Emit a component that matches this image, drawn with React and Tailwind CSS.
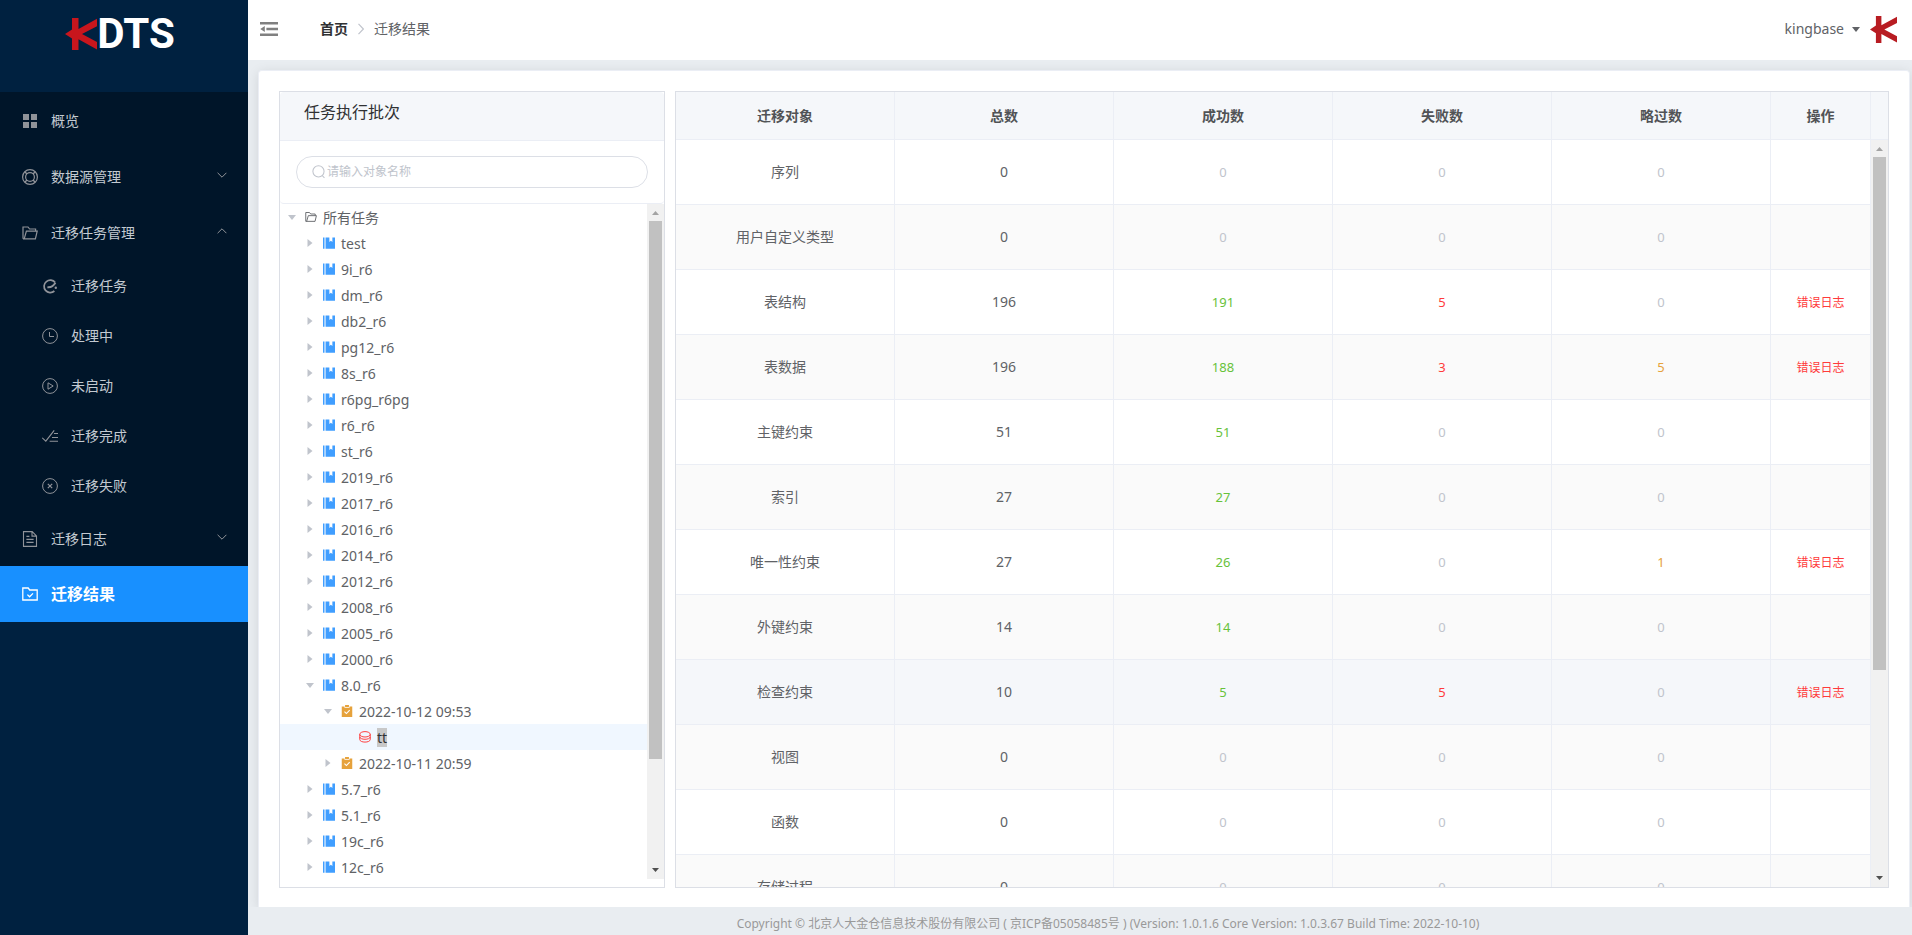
import { useState } from 'react';
import clsx from 'clsx';

const Icon = ({ className, children }) => (
  <svg
    viewBox="0 0 16 16"
    className={clsx('shrink-0', className)}
    fill="none"
    stroke="currentColor"
    strokeWidth="1"
    aria-hidden="true"
  >
    {children}
  </svg>
);

const icons = {
  menu: <path d="M1 1h6v6H1zM9 1h6v6H9zM1 9h6v6H1zM9 9h6v6H9z" fill="currentColor" stroke="none" />,
  help: (
    <>
      <circle cx="8" cy="8" r="7.4" strokeWidth="1.2" />
      <circle cx="8" cy="8" r="4.4" strokeWidth="1.2" />
      <path d="M3 3l2 2M13 3l-2 2M3 13l2-2M13 13l-2-2" strokeWidth="1.4" />
    </>
  ),
  folderOpened: (
    <path d="M1 13.8V2h5l1.6 2h6v2.2M1 13.8h12.4l1.8-7.6H4.4L2.2 13.8" strokeWidth="1.2" />
  ),
  task: (
    <>
      <path d="M13.2 4.6A6.2 6.2 0 1 0 12.4 13" strokeWidth="1.7" />
      <path d="M5.4 9.2c3.4.4 6.2-1.2 8-4.4" strokeWidth="1.9" />
      <circle cx="13.8" cy="9.8" r="1.2" fill="currentColor" stroke="none" />
    </>
  ),
  time: (
    <>
      <circle cx="8" cy="8" r="7.4" />
      <path d="M7.5 4v4.5H12" />
    </>
  ),
  play: (
    <>
      <circle cx="8" cy="8" r="7.4" />
      <path d="M6 4.8v6.4L11.2 8z" />
    </>
  ),
  finished: (
    <path d="M.2 9.8l3.6 3.4L12.2 2.4M12 5.5h4M10 9.5h6M7.6 13.3H16" strokeWidth="1.1" />
  ),
  close: (
    <>
      <circle cx="8" cy="8" r="7.4" />
      <path d="M5.8 5.8l4.4 4.4M10.2 5.8l-4.4 4.4" strokeWidth="1.2" />
    </>
  ),
  document: (
    <path d="M1.5.6h8.7l4.3 4.3v10.5h-13zM10 .8v4.3h4.3M4.4 5.4h3M4.4 8.4h7.2M4.4 11.4h7.2" strokeWidth="1.1" />
  ),
  folderChecked: (
    <path d="M.8 14V2h5.4l1.5 2h7.5v10zM5.4 8.6l2.2 2.2 3.4-3.4" strokeWidth="1.3" />
  ),
  notebook: (
    <path d="M0 .5h2v15H0zM3.4.5h5.1v6l2-1.6 2 1.6v-6H16v15H3.4z" fill="currentColor" stroke="none" />
  ),
  clipboard: (
    <>
      <path d="M1 2h3.6v1.6h6.8V2H15v14H1zM5.4 0h5.2v2.6H5.4z" fill="currentColor" stroke="none" />
      <path d="M4.6 8.8l2.6 2.6 4.4-4.6" stroke="#fff" strokeWidth="1.5" />
    </>
  ),
  coin: (
    <>
      <ellipse cx="8" cy="4.4" rx="7" ry="3.6" strokeWidth="1.3" />
      <path d="M1 4.4v3.2c0 4.6 14 4.6 14 0V4.4M1 7.8v3.4c0 4.8 14 4.8 14 0V7.8" strokeWidth="1.3" />
    </>
  ),
  search: (
    <>
      <circle cx="7.4" cy="7.2" r="6.4" strokeWidth="1.2" />
      <path d="M11.6 12l2.6 2.8" strokeWidth="1.2" />
    </>
  ),
};

const subMenus = [
  { icon: 'task', label: '迁移任务' },
  { icon: 'time', label: '处理中' },
  { icon: 'play', label: '未启动' },
  { icon: 'finished', label: '迁移完成' },
  { icon: 'close', label: '迁移失败' },
];

const treeNodes = [
  { label: '所有任务', level: 0, icon: 'folderOpened', open: true },
  ...[
    'test', '9i_r6', 'dm_r6', 'db2_r6', 'pg12_r6', '8s_r6', 'r6pg_r6pg', 'r6_r6', 'st_r6',
    '2019_r6', '2017_r6', '2016_r6', '2014_r6', '2012_r6', '2008_r6', '2005_r6', '2000_r6',
  ].map((label) => ({ label, level: 1, icon: 'notebook' })),
  { label: '8.0_r6', level: 1, icon: 'notebook', open: true },
  { label: '2022-10-12 09:53', level: 2, icon: 'clipboard', open: true },
  { label: 'tt', level: 3, icon: 'coin', leaf: true },
  { label: '2022-10-11 20:59', level: 2, icon: 'clipboard' },
  ...['5.7_r6', '5.1_r6', '19c_r6', '12c_r6'].map((label) => ({ label, level: 1, icon: 'notebook' })),
];

const indents = ['pl-0', 'pl-[18px]', 'pl-[36px]', 'pl-[54px]'];

const nodeColors = {
  folderOpened: 'text-[#606266]',
  notebook: 'text-[#409eff]',
  clipboard: 'text-[#e6a23c]',
  coin: 'text-[#ff3b3b]',
};

// name, total, success, failed, skipped
const results = [
  ['序列', 0, 0, 0, 0],
  ['用户自定义类型', 0, 0, 0, 0],
  ['表结构', 196, 191, 5, 0],
  ['表数据', 196, 188, 3, 5],
  ['主键约束', 51, 51, 0, 0],
  ['索引', 27, 27, 0, 0],
  ['唯一性约束', 27, 26, 0, 1],
  ['外键约束', 14, 14, 0, 0],
  ['检查约束', 10, 5, 5, 0],
  ['视图', 0, 0, 0, 0],
  ['函数', 0, 0, 0, 0],
  ['存储过程', 0, 0, 0, 0],
];

const KMark = ({ className, color }) => (
  <svg viewBox="0 0 32 32" className={clsx('shrink-0', className)} fill={color} aria-hidden="true">
    <path d="M7 0h6.5v11L32 .8v7.4L17 16l15 8v7.4L13.5 21.2V32H7V20.4L0 16l7-4.6z" />
  </svg>
);

const Chevron = ({ up }) => (
  <svg viewBox="0 0 10 6" className="h-1.5 w-2.5" fill="none" stroke="currentColor" aria-hidden="true">
    <path d={up ? 'M.6 5.2L5 .8l4.4 4.4' : 'M.6.8L5 5.2 9.4.8'} />
  </svg>
);

const MenuItem = ({ icon, label, arrow }) => (
  <a href="#" className="flex h-14 items-center gap-[13px] pt-0.5 pr-[21px] pl-[22px] text-sm text-[#c3cad1]">
    <Icon className="h-4 w-4 text-[#909399]">{icons[icon]}</Icon>
    <span className="flex-1">{label}</span>
    {arrow && (
      <span className="pb-1 text-[#909399]">
        <Chevron up={arrow === 'up'} />
      </span>
    )}
  </a>
);

const Sidebar = () => (
  <aside className="w-[248px] shrink-0 bg-[#002140]">
    <div className="flex h-[92px] items-start justify-center pt-[18px] pr-2">
      <KMark className="h-8 w-8" color="#c8161d" />
      <span className="font-['Roboto',sans-serif] text-[42px] leading-8 font-bold text-white">
        DTS
      </span>
    </div>
    <nav className="bg-[#001529]">
      <MenuItem icon="menu" label="概览" />
      <MenuItem icon="help" label="数据源管理" arrow="down" />
      <MenuItem icon="folderOpened" label="迁移任务管理" arrow="up" />
      {subMenus.map((item) => (
        <a
          key={item.label}
          href="#"
          className="flex h-[50px] items-center gap-[13px] pt-0.5 pl-[42px] text-sm text-[#c3cad1]"
        >
          <Icon className="h-4 w-4 text-[#909399]">{icons[item.icon]}</Icon>
          {item.label}
        </a>
      ))}
      <MenuItem icon="document" label="迁移日志" arrow="down" />
      <a
        href="#"
        aria-current="page"
        className="flex h-14 items-center gap-[13px] bg-[#1890ff] pl-[22px] text-base font-bold text-white"
      >
        <Icon className="h-4 w-4">{icons.folderChecked}</Icon>
        迁移结果
      </a>
    </nav>
  </aside>
);

const Header = () => (
  <header className="flex h-[60px] shrink-0 items-center bg-white pr-[15px] pb-0.5 pl-3">
    <button type="button" aria-label="收起菜单" className="text-[#808080]">
      <svg viewBox="0 0 18 14" className="h-3.5 w-[18px]" fill="currentColor" aria-hidden="true">
        <path d="M0 0h18v2.6H0zM6.400 5.700H18v2.6H6.400zM0 11.400h18V14H0zM4.800 4v6L.3 7z" />
      </svg>
    </button>
    <nav className="ml-[42px] flex flex-1 items-center text-sm">
      <a href="#" className="font-bold text-[#303133]">首页</a>
      <svg viewBox="0 0 6 12" className="mx-2.5 h-3 w-1.5" fill="none" stroke="#c0c4cc" strokeWidth="1.2" aria-hidden="true">
        <path d="M.5 .8L5.400 6 .5 11.200" />
      </svg>
      <span className="text-[#606266]">迁移结果</span>
    </nav>
    <button type="button" className="flex items-center text-sm text-[#606266]">
      kingbase
      <svg viewBox="0 0 8 5" className="mr-2.5 ml-2 h-[5px] w-2" fill="currentColor" aria-hidden="true">
        <path d="M0 0h8L4 5z" />
      </svg>
      <KMark className="h-[27px] w-[27px]" color="#b81c22" />
    </button>
  </header>
);

const Scrollbar = ({ thumb }) => (
  <div className="flex w-[17px] flex-1 flex-col items-center bg-[#f1f1f1]">
    <svg viewBox="0 0 17 17" className="h-[17px] w-[17px] shrink-0" fill="#a3a3a3" aria-hidden="true">
      <path d="M5 11h7L8.500 7z" />
    </svg>
    <div className="flex min-h-0 w-full flex-1 flex-col items-center">
      <div className={clsx('w-[13px] bg-[#c1c1c1]', thumb)} />
    </div>
    <svg viewBox="0 0 17 17" className="h-[17px] w-[17px] shrink-0" fill="#505050" aria-hidden="true">
      <path d="M5 6h7l-3.500 4z" />
    </svg>
  </div>
);

const TaskTree = () => {
  const [keyword, setKeyword] = useState('');
  const [selected, setSelected] = useState('tt');

  return (
    <section className="flex w-[386px] shrink-0 flex-col border border-[#dcdfe6] pb-2">
      <div className="shrink-0 overflow-hidden rounded border-b border-[#ebeef5]">
        <h2 className="h-[49px] border-b border-[#ebeef5] bg-[#f5f7fa] pl-6 text-base leading-10 text-[#303133]">
          任务执行批次
        </h2>
        <div className="px-4 py-[15px]">
          <label className="flex h-8 items-center gap-px rounded-full border border-[#dcdfe6] pr-4 pl-[15px] text-[#c0c4cc]">
            <Icon className="h-3.5 w-3.5">{icons.search}</Icon>
            <input
              type="text"
              aria-label="请输入对象名称"
              placeholder="请输入对象名称"
              value={keyword}
              onChange={(e) => setKeyword(e.target.value)}
              className="min-w-0 flex-1 text-xs text-[#606266] outline-none placeholder:text-[#c0c4cc]"
            />
          </label>
        </div>
      </div>
      <div className="flex min-h-0 flex-1">
        <ul className="min-w-0 flex-1 overflow-hidden">
          {treeNodes.map((node) => (
            <li key={node.label}>
              <button
                type="button"
                onClick={() => setSelected(node.label)}
                className={clsx(
                  'flex h-[26px] w-full items-center text-sm text-[#606266]',
                  indents[node.level],
                  selected === node.label && 'bg-[#f0f7ff]'
                )}
              >
                <span className="flex w-6 shrink-0 justify-center">
                  {!node.leaf && (
                    <svg viewBox="0 0 8 8" className="h-2 w-2" fill="#c0c4cc" aria-hidden="true">
                      <path d={node.open ? 'M0 2h8L4 7z' : 'M1.500 0v8l5-4z'} />
                    </svg>
                  )}
                </span>
                <span className="mr-[5px] flex w-3.5 shrink-0 justify-center">
                  <Icon className={clsx('h-3 w-3', nodeColors[node.icon])}>{icons[node.icon]}</Icon>
                </span>
                <span className={clsx('leading-[19px]', node.leaf && 'bg-[#c8c8c8] text-[#303133]')}>
                  {node.label}
                </span>
              </button>
            </li>
          ))}
        </ul>
        <div className="flex flex-col">
          <Scrollbar thumb="h-[84%]" />
        </div>
      </div>
    </section>
  );
};

const Count = ({ value, color }) => (
  <td className={clsx('border-r border-b border-[#ebeef5] text-[13px]', value ? color : 'text-[#c0c4cc]')}>
    {value}
  </td>
);

const ResultTable = () => (
  <section className="flex min-w-0 flex-1 overflow-hidden border border-[#dcdfe6]">
    <div className="min-w-0 flex-1 overflow-hidden">
      <table className="w-full table-fixed border-separate border-spacing-0 text-center text-sm text-[#606266]">
        <thead>
          <tr className="h-12 bg-[#f5f7fa] text-[#515356]">
            {['迁移对象', '总数', '成功数', '失败数', '略过数'].map((title) => (
              <th key={title} className="border-r border-b border-[#ebeef5] font-bold">{title}</th>
            ))}
            <th className="w-[100px] border-r border-b border-[#ebeef5] font-bold">操作</th>
          </tr>
        </thead>
        <tbody>
          {results.map(([name, total, success, failed, skipped], index) => (
            <tr
              key={name}
              className={clsx(
                'h-[65px]',
                name === '检查约束' ? 'bg-[#f5f7fa]' : index % 2 === 1 && 'bg-[#fafafa]'
              )}
            >
              <td className="border-r border-b border-[#ebeef5]">{name}</td>
              <td className="border-r border-b border-[#ebeef5]">{total}</td>
              <Count value={success} color="text-[#67c23a]" />
              <Count value={failed} color="text-[#ff3b3b]" />
              <Count value={skipped} color="text-[#e6a23c]" />
              <td className="border-r border-b border-[#ebeef5]">
                {(failed > 0 || skipped > 0) && (
                  <a href="#" className="text-xs text-[#ff3b3b]">错误日志</a>
                )}
              </td>
            </tr>
          ))}
        </tbody>
      </table>
    </div>
    <div className="flex flex-col">
      <div className="h-12 border-b border-[#ebeef5] bg-[#f5f7fa]" />
      <Scrollbar thumb="h-[72%]" />
    </div>
  </section>
);

const App = () => (
  <div className="flex h-screen overflow-hidden bg-[#e9edf1] font-['Noto_Sans','Noto_Sans_CJK_SC',sans-serif]">
    <Sidebar />
    <div className="flex min-w-0 flex-1 flex-col">
      <Header />
      <div className="flex min-h-0 flex-1 overflow-hidden pt-2.5 pr-0.5 pl-2.5">
        <main className="flex min-w-0 flex-1 gap-2.5 rounded-t border border-b-0 border-[#ebeef5] bg-white px-5 pt-5 pb-[19px] shadow-[0_2px_12px_rgba(0,0,0,0.1)]">
          <TaskTree />
          <ResultTable />
        </main>
      </div>
      <footer className="z-10 flex h-7 shrink-0 items-center justify-center bg-[#e9edf1] pt-1.5 pl-14 text-xs text-[#999]">
        Copyright © 北京人大金仓信息技术股份有限公司 ( 京ICP备05058485号 ) (Version: 1.0.1.6 Core Version: 1.0.3.67 Build Time: 2022-10-10)
      </footer>
    </div>
  </div>
);

export default App;
